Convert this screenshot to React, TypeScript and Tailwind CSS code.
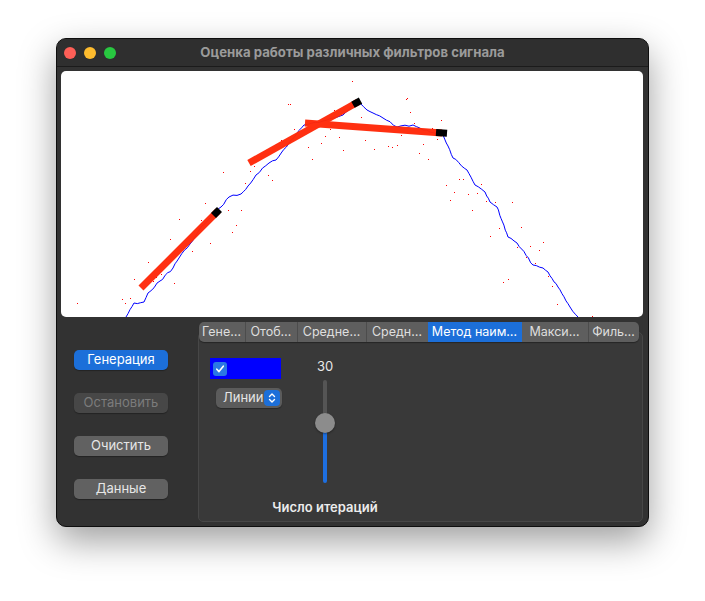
import React from "react";

const bluePts: [number, number][] = [
  [126, 317], [134, 303], [144, 302], [148, 293], [160, 281], [173, 268], [179, 258], [190, 244], [199, 230], [210, 218], [221, 207], [229, 197], [241, 194], [248, 186], [256, 175], [269, 163], [276, 160], [289, 143], [304, 125], [323, 121], [343, 115], [354, 105], [360, 103], [367, 110], [373, 113], [383, 118], [397, 127], [413, 125], [430, 132], [443, 135], [453, 158], [467, 170], [475, 185], [485, 192], [490, 202], [497, 207], [508, 237], [517, 243], [533, 265], [543, 268], [548, 272], [558, 287], [570, 307], [578, 317],
];

function seeded(seed: number) {
  let s = seed;
  return () => {
    s = (s * 1103515245 + 12345) % 2147483648;
    return s / 2147483648;
  };
}

const rnd = seeded(7);
const bluePath: string = (() => {
  const out: string[] = [];
  for (let i = 0; i < bluePts.length - 1; i++) {
    const [x1, y1] = bluePts[i];
    const [x2, y2] = bluePts[i + 1];
    const steps = Math.max(1, Math.round(Math.hypot(x2 - x1, y2 - y1) / 4));
    for (let k = 0; k < steps; k++) {
      const t = k / steps;
      const x = x1 + (x2 - x1) * t;
      const y = y1 + (y2 - y1) * t + (k === 0 ? 0 : (rnd() - 0.5) * 2);
      out.push(`${x.toFixed(1)},${y.toFixed(1)}`);
    }
  }
  const last = bluePts[bluePts.length - 1];
  out.push(`${last[0]},${last[1]}`);
  return "M" + out.join(" L");
})();

const dots: [number, number][] = [
  [77, 303], [122, 299], [130, 298], [125, 303], [134, 279], [148, 262], [153, 281], [156, 277], [161, 274], [166, 259], [170, 239], [174, 283], [179, 219], [192, 251], [201, 220], [205, 203], [210, 243], [223, 172], [228, 210], [232, 232], [236, 225], [241, 210], [245, 183], [250, 171], [254, 166], [268, 175], [272, 180], [276, 144], [281, 140], [290, 104], [294, 129], [308, 147], [312, 159], [321, 143], [325, 136], [330, 129], [334, 110], [339, 137], [343, 150], [352, 81], [361, 117], [365, 140], [374, 149], [388, 146], [392, 147], [397, 145], [401, 135], [406, 99], [410, 112], [414, 123], [419, 153], [423, 144], [428, 159], [432, 128], [437, 139], [441, 120], [446, 185], [450, 200], [454, 192], [459, 179], [463, 179], [468, 194], [472, 210], [477, 193], [481, 184], [486, 201], [490, 236], [495, 202], [499, 228], [503, 282], [508, 279], [512, 202], [517, 247], [521, 227], [526, 257], [530, 246], [535, 263], [539, 250], [543, 242], [548, 276], [552, 286], [557, 304], [592, 316], [288, 104], [407, 98],
];

const tabs = [
  { label: "Гене…", w: "w-[46px]" },
  { label: "Отоб…", w: "w-[52px]" },
  { label: "Средне…", w: "w-[69px]" },
  { label: "Средн…", w: "w-[62px]" },
  { label: "Метод наим…", w: "w-[94px]", active: true },
  { label: "Макси…", w: "w-[66px]" },
  { label: "Филь…", w: "w-[51px]" },
];

function Plot() {
  return (
    <svg className="block h-full w-full" viewBox="61 71 582 246" preserveAspectRatio="none">
      <path d={bluePath} fill="none" stroke="#0000ff" strokeWidth="1" />
      {dots.map(([x, y], i) => (
        <rect key={i} x={x} y={y} width="1.4" height="1.4" fill="#ff0000" shapeRendering="crispEdges" />
      ))}
      <g stroke="#ff2a0a" strokeWidth="7" strokeLinecap="butt" opacity="0.97">
        <line x1="141" y1="288" x2="218" y2="211" />
        <line x1="249" y1="163" x2="358" y2="102" />
        <line x1="305" y1="123" x2="442" y2="133" />
      </g>
      <g stroke="#000" strokeWidth="7" strokeLinecap="butt">
        <line x1="213.5" y1="215.5" x2="219.5" y2="209.5" />
        <line x1="353" y1="104.8" x2="360.5" y2="100.6" />
        <line x1="436" y1="132.5" x2="447" y2="133.3" />
      </g>
    </svg>
  );
}

function Btn({ children, variant }: { children: React.ReactNode; variant: "blue" | "gray" | "disabled" }) {
  const cls =
    variant === "blue"
      ? "bg-[#1c6fd9] text-white"
      : variant === "disabled"
      ? "bg-[#474747] text-[#7c7c7c]"
      : "bg-[#616161] text-[#e6e6e6]";
  return (
    <div className={`flex h-[20px] w-[94px] items-center justify-center rounded-[5px] text-[13px] shadow-[0_1px_1px_rgba(0,0,0,0.3)] ${cls}`}>
      {children}
    </div>
  );
}

export default function App() {
  return (
    <div
      className="min-h-[601px] bg-white pl-[56px] pt-[38px]"
      style={{ fontFamily: "Inter, 'Noto Sans', sans-serif" }}
    >
      <div className="flex h-[489px] w-[593px] flex-col overflow-hidden rounded-[10px] border border-[#0e0e0e] bg-[#323232] shadow-[0_14px_36px_rgba(0,0,0,0.38)]">
        {/* Title bar */}
        <div className="relative flex h-[28px] shrink-0 items-center border-b border-[#1b1b1b] bg-[#2f2f2f]">
          <div className="ml-[7px] flex gap-[8px]">
            <div className="h-[12px] w-[12px] rounded-full bg-[#fe5f57]" />
            <div className="h-[12px] w-[12px] rounded-full bg-[#febc2e]" />
            <div className="h-[12px] w-[12px] rounded-full bg-[#28c840]" />
          </div>
          <div className="absolute inset-0 flex items-center justify-center text-[13.2px] font-bold text-[#9b9b9b]">
            Оценка работы различных фильтров сигнала
          </div>
        </div>
        {/* Plot */}
        <div className="mx-[4px] mt-[4px] h-[246px] w-[582px] shrink-0 overflow-hidden rounded-[5px] bg-white">
          <Plot />
        </div>
        {/* Bottom */}
        <div className="flex flex-1">
          <div className="flex w-[141px] shrink-0 flex-col gap-[23px] pl-[17px] pt-[33px]">
            <Btn variant="blue">Генерация</Btn>
            <Btn variant="disabled">Остановить</Btn>
            <Btn variant="gray">Очистить</Btn>
            <Btn variant="gray">Данные</Btn>
          </div>
          <div className="flex w-[445px] flex-col pt-[5px]">
            <div className="relative z-10 flex justify-center pr-[4px]">
              <div className="flex h-[20px] overflow-hidden rounded-[5px] bg-[#5e5e5e] shadow-[0_1px_1px_rgba(0,0,0,0.35)]">
                {tabs.map((t, i) => (
                  <div
                    key={i}
                    className={`flex h-full items-center justify-center whitespace-nowrap text-[12.5px] ${t.w} ${
                      t.active ? "bg-[#1c6fd9] text-white" : "text-[#dedede]"
                    } ${i > 0 && !t.active && !tabs[i - 1].active ? "border-l border-[#4c4c4c]" : ""}`}
                  >
                    {t.label}
                  </div>
                ))}
              </div>
            </div>
            <div className="-mt-[10px] flex h-[190px] rounded-[5px] border border-[#474747] bg-[#393939] pl-[11px] pt-[25px]">
              <div className="flex w-[71px] flex-col">
                <div className="flex h-[21px] w-[71px] items-center bg-[#0000ff] pl-[3px]">
                  <div className="flex h-[14px] w-[14px] items-center justify-center rounded-[3px] bg-[#2a78e4]">
                    <svg width="10" height="10" viewBox="0 0 10 10">
                      <path d="M1.8 5.2 L4 7.6 L8.3 2.2" fill="none" stroke="white" strokeWidth="1.6" strokeLinecap="round" strokeLinejoin="round" />
                    </svg>
                  </div>
                </div>
                <div className="ml-[6px] mt-[9px] flex h-[20px] w-[66px] items-center justify-between rounded-[5px] bg-[#5b5b5b] pl-[7px] pr-[2px] shadow-[0_1px_1px_rgba(0,0,0,0.3)]">
                  <span className="text-[13px] text-[#e6e6e6]">Линии</span>
                  <div className="flex h-[16px] w-[16px] items-center justify-center rounded-[4px] bg-[#1c6fd9]">
                    <svg width="8" height="12" viewBox="0 0 8 12">
                      <path d="M1.5 4.5 L4 2 L6.5 4.5 M1.5 7.5 L4 10 L6.5 7.5" fill="none" stroke="white" strokeWidth="1.4" strokeLinecap="round" strokeLinejoin="round" />
                    </svg>
                  </div>
                </div>
              </div>
              <div className="ml-[24px] flex w-[40px] flex-col items-center">
                <div className="h-[16px] text-[13px] leading-[16px] text-[#e8e8e8]">30</div>
                <div className="relative mt-[6px] flex h-[103px] w-[4px] flex-col overflow-visible">
                  <div className="h-[43px] w-[4px] rounded-t-full bg-[#555555]" />
                  <div className="w-[4px] flex-1 rounded-b-full bg-[#1e6fe0]" />
                  <div className="absolute left-[-8px] top-[33px] h-[20px] w-[20px] rounded-full bg-[#8c8c8c] shadow-[0_1px_2px_rgba(0,0,0,0.4)]" />
                </div>
                <div className="mt-[16px] whitespace-nowrap text-[13px] font-semibold leading-[16px] text-[#ececec]">
                  Число итераций
                </div>
              </div>
            </div>
          </div>
        </div>
      </div>
    </div>
  );
}
